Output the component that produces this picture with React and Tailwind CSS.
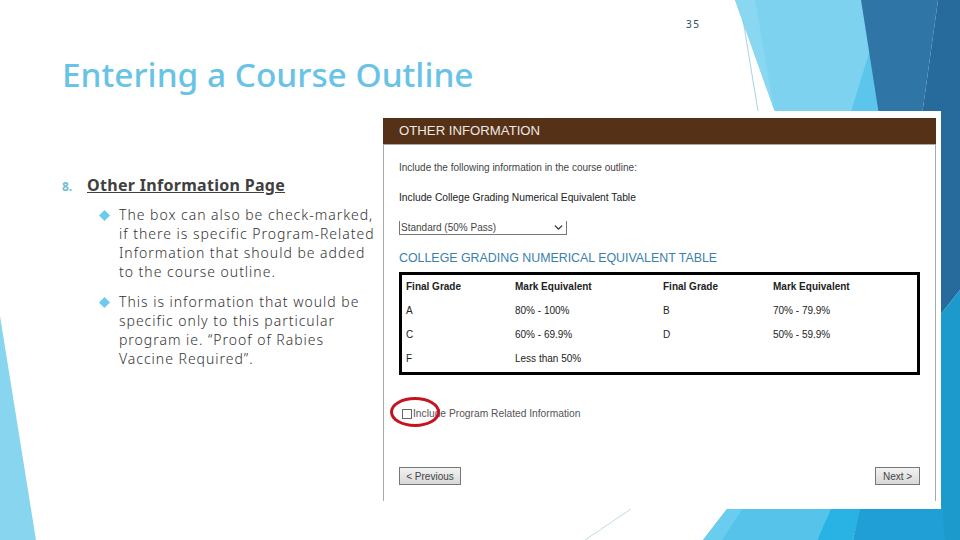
import { ChevronDown } from "lucide-react";

const GRADES = [
  ["A", "80% - 100%", "B", "70% - 79.9%"],
  ["C", "60% - 69.9%", "D", "50% - 59.9%"],
  ["F", "Less than 50%", "", ""],
];

// slide background shapes
const Backdrop = () => (
  <svg className="absolute inset-0" width="960" height="540" viewBox="0 0 960 540">
    <polygon points="735,0 862,0 880,115 776,115" fill="#7dd2f0" />
    <polygon points="735,0 755,0 775,115 776,115" fill="#8ad7f2" />
    <polygon points="870,50 850,115 880,115" fill="#5cc5ec" />
    <polygon points="861,0 938,0 922,115 879,115" fill="#2f76a7" />
    <polygon points="938,0 960,0 960,290 941,314 941,115 922,115" fill="#276b9d" />
    <polygon points="941,314 960,290 960,540 941,540" fill="#1d9acc" />
    <polygon points="730,505 835,505 817,540 703,540" fill="#55c3ea" />
    <polygon points="730,505 745,505 722,540 703,540" fill="#6accee" />
    <polygon points="833,505 862,505 853,540 817,540" fill="#29b3e4" />
    <polygon points="861,505 942,505 945,540 853,540" fill="#1f9fd6" />
    <polygon points="0,316 36,540 0,540" fill="#88d5f0" />
    <line x1="743" y1="20" x2="758" y2="111" stroke="#8fc9dc" strokeWidth="0.8" />
    <line x1="631" y1="509" x2="585" y2="540" stroke="#a9d3dd" strokeWidth="0.8" />
  </svg>
);

const Bullet = ({ children }) => (
  <li className="flex">
    <svg className="mt-[5px] shrink-0" width="11" height="11" viewBox="0 0 11 11">
      <polygon points="5.5,0 11,5.5 5.5,11 0,5.5" fill="#6ccbea" />
    </svg>
    <p className="ml-[9px] w-[256px] font-['Noto_Sans',sans-serif] font-light text-[14px] leading-[19px] tracking-[0.98px] text-[#333]">
      {children}
    </p>
  </li>
);

const GradeTable = () => (
  <div className="border-[3px] border-black mt-[7px] ml-[15px] w-[521px] h-[103px] pl-[4px]">
    <div className="grid grid-cols-[109px_148px_110px_1fr] text-[10px] leading-[24px] text-[#222]">
      <b>Final Grade</b>
      <b>Mark Equivalent</b>
      <b>Final Grade</b>
      <b>Mark Equivalent</b>
      {GRADES.flat().map((cell, i) => (
        <span key={i}>{cell}</span>
      ))}
    </div>
  </div>
);

const NavButton = ({ children, className }) => (
  <button className={`h-[18px] border border-[#777] bg-gradient-to-b from-[#f2f2f2] to-[#d8d8d8] text-[10px] text-[#444] ${className}`}>
    {children}
  </button>
);

export default function App() {
  return (
    <div className="relative w-[960px] h-[540px] overflow-hidden bg-white font-['Liberation_Sans',sans-serif]">
      <Backdrop />
      <div className="relative flex flex-col">
        <div className="h-[55px] pt-[17px] pl-[686px] font-['Noto_Sans',sans-serif] text-[10px] leading-[14px] tracking-[1.5px] text-[#2b4a5a]">
          35
        </div>
        <h1 className="h-[56px] pl-[62px] font-['Noto_Sans',sans-serif] font-medium text-[33.4px] leading-[38px] text-[#68c3e6]">
          Entering a Course Outline
        </h1>

        <div className="flex">
          <div className="w-[383px] shrink-0 pl-[62px] pt-[63px]">
            <div className="flex items-baseline">
              <span className="w-[25px] text-[12px] font-bold text-[#72bcd8] font-['Noto_Sans',sans-serif]">8.</span>
              <h2 className="font-['Noto_Sans',sans-serif] font-bold text-[16px] leading-[22px] tracking-[0.3px] underline text-[#404040]">
                Other Information Page
              </h2>
            </div>
            <ul className="mt-[9px] ml-[37px] flex flex-col gap-[11px]">
              <Bullet>
                The box can also be check-marked, if there is specific Program-Related Information that should be added to the course outline.
              </Bullet>
              <Bullet>
                This is information that would be specific only to this particular program ie. “Proof of Rabies Vaccine Required”.
              </Bullet>
            </ul>
          </div>

          <section className="w-[558px] h-[398px] bg-white pt-[7px] pr-[5px]">
            <div className="h-[27px] bg-[#553118] pl-4 flex items-center text-[13.2px] font-medium text-[#efe8e0] border-b border-[#aaa]">
              OTHER INFORMATION
            </div>
            <div className="relative h-[356px] border-x border-b-0 border-[#aaa]">
              <div className="pt-[16px] pl-[15px] text-[10px] leading-[14px] text-[#444]">
                Include the following information in the course outline:
              </div>
              <div className="pt-[16px] pl-[15px] text-[10.25px] leading-[14px] text-[#222]">
                Include College Grading Numerical Equivalent Table
              </div>
              <div className="mt-[16px] ml-[15px] w-[168px] h-[14px] border-x border-b border-[#777] flex items-center justify-between pl-[1px] pr-[1px] text-[10px] text-[#444]">
                Standard (50% Pass)
                <ChevronDown size={13} strokeWidth={2.5} color="#333" />
              </div>
              <div className="mt-[16px] ml-[15px] text-[12.4px] leading-[14px] text-[#3b7fae]">
                COLLEGE GRADING NUMERICAL EQUIVALENT TABLE
              </div>
              <GradeTable />
              <div className="mt-[34px] ml-[18px] flex items-center text-[10.25px] leading-[10px] text-[#555]">
                <span className="w-[10px] h-[10px] border border-[#666] mr-[1px]" />
                Include Program Related Information
              </div>
              <svg className="absolute left-[5px] top-[251px]" width="52" height="32" viewBox="0 0 52 32">
                <ellipse cx="26" cy="16" rx="23.5" ry="13.5" fill="none" stroke="#c5141f" strokeWidth="3" />
              </svg>
              <div className="mt-[48px] ml-[15px] w-[521px] flex justify-between">
                <NavButton className="w-[62px]">&lt; Previous</NavButton>
                <NavButton className="w-[45px]">Next &gt;</NavButton>
              </div>
            </div>
          </section>
        </div>
      </div>
    </div>
  );
}
